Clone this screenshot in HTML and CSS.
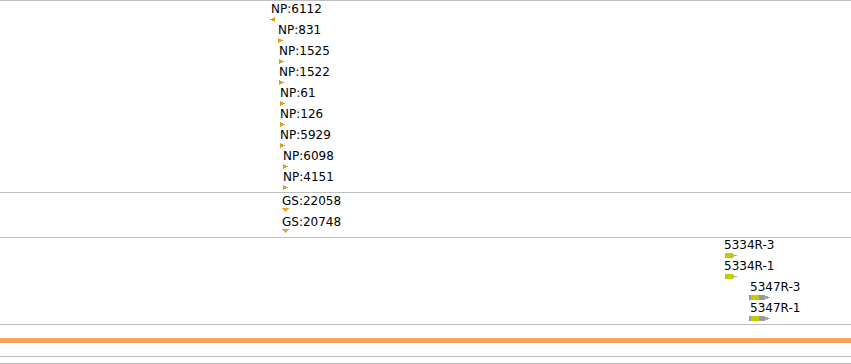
FILE: index.html
```html
<!DOCTYPE html>
<html>
<head>
<meta charset="utf-8">
<link rel="stylesheet" href="styles.css">
</head>
<body>
<div class="browser">
  <section class="track track-np">
    <div class="feature" style="margin-left:271px"><span class="label">NP:6112</span><svg class="glyph glyph-left" width="6" height="9"><polygon class="tri" points="5,2 0,4.5 5,7"/></svg></div>
    <div class="feature" style="margin-left:278px"><span class="label">NP:831</span><svg class="glyph" width="6" height="9"><polygon class="tri" points="0,2 5,4.5 0,7"/></svg></div>
    <div class="feature" style="margin-left:279px"><span class="label">NP:1525</span><svg class="glyph" width="6" height="9"><polygon class="tri" points="0,2 5,4.5 0,7"/></svg></div>
    <div class="feature" style="margin-left:279px"><span class="label">NP:1522</span><svg class="glyph" width="6" height="9"><polygon class="tri" points="0,2 5,4.5 0,7"/></svg></div>
    <div class="feature" style="margin-left:280px"><span class="label">NP:61</span><svg class="glyph" width="6" height="9"><polygon class="tri" points="0,2 5,4.5 0,7"/></svg></div>
    <div class="feature" style="margin-left:280px"><span class="label">NP:126</span><svg class="glyph" width="6" height="9"><polygon class="tri" points="0,2 5,4.5 0,7"/></svg></div>
    <div class="feature" style="margin-left:280px"><span class="label">NP:5929</span><svg class="glyph" width="6" height="9"><polygon class="tri" points="0,2 5,4.5 0,7"/></svg></div>
    <div class="feature" style="margin-left:283px"><span class="label">NP:6098</span><svg class="glyph" width="6" height="9"><polygon class="tri" points="0,2 5,4.5 0,7"/></svg></div>
    <div class="feature" style="margin-left:283px"><span class="label">NP:4151</span><svg class="glyph" width="6" height="9"><polygon class="tri" points="0,2 5,4.5 0,7"/></svg></div>
  </section>
  <section class="track track-gs">
    <div class="feature" style="margin-left:282px"><span class="label">GS:22058</span><svg class="glyph" width="8" height="9"><polygon class="tri-down" points="0,1 7,1 3.5,5"/></svg></div>
    <div class="feature" style="margin-left:282px"><span class="label">GS:20748</span><svg class="glyph" width="8" height="9"><polygon class="tri-down" points="0,1 7,1 3.5,5"/></svg></div>
  </section>
  <section class="track track-prb">
    <div class="feature" style="margin-left:724px"><span class="label">5334R-3</span><svg class="glyph" width="14" height="9"><rect class="probe" x="1" y="2" width="8" height="5"/><polygon class="arrow" points="9,3 13,4.5 9,6"/></svg></div>
    <div class="feature" style="margin-left:724px"><span class="label">5334R-1</span><svg class="glyph" width="14" height="9"><rect class="probe" x="1" y="2" width="8" height="5"/><polygon class="arrow" points="9,3 13,4.5 9,6"/></svg></div>
    <div class="feature" style="margin-left:750px"><span class="label">5347R-3</span><svg class="glyph glyph-left" width="22" height="9"><rect class="body" x="0" y="2" width="16" height="5"/><rect class="probe" x="2" y="2" width="8" height="5"/><polygon class="arrow" points="16,2.5 21,4.5 16,6.5"/></svg></div>
    <div class="feature" style="margin-left:750px"><span class="label">5347R-1</span><svg class="glyph glyph-left" width="22" height="9"><rect class="body" x="0" y="2" width="16" height="5"/><rect class="probe" x="2" y="2" width="8" height="5"/><polygon class="arrow" points="16,2.5 21,4.5 16,6.5"/></svg></div>
  </section>
  <div class="highlight"></div>
  <div class="ruler"></div>
</div>
</body>
</html>
```

FILE: styles.css
```css
html, body {
  margin: 0;
  padding: 0;
  background: #ffffff;
}

body {
  font-family: "DejaVu Sans", "Liberation Sans", sans-serif;
  font-size: 12px;
  color: #000000;
  width: 851px;
  height: 364px;
  overflow: hidden;
}

.browser {
  display: flex;
  flex-direction: column;
}

.track {
  display: flex;
  flex-direction: column;
  border-bottom: 1px solid #c0c0c0;
}

.track-np {
  border-top: 1px solid #c0c0c0;
  padding-top: 2px;
  height: 189px;
}

.track-gs {
  padding-top: 2px;
  height: 42px;
}

.track-prb {
  padding-top: 1px;
  height: 85px;
}

.feature {
  display: flex;
  flex-direction: column;
  align-items: flex-start;
  height: 21px;
  flex: none;
}

.label {
  line-height: 12px;
  height: 12px;
  white-space: nowrap;
}

.glyph {
  display: block;
  overflow: visible;
  shape-rendering: crispEdges;
}

.glyph-left {
  margin-left: -1px;
}

.tri {
  fill: #d9a11c;
}

.tri-down {
  fill: #eea62a;
}

.probe {
  fill: #c2cc00;
}

.body {
  fill: #9a9a9a;
}

.arrow {
  fill: #a8a8a8;
}

.highlight {
  margin-top: 13px;
  height: 5px;
  background: #f4a460;
}

.ruler {
  margin-top: 13px;
  height: 6px;
  border-top: 1px solid #c0c0c0;
  border-bottom: 1px solid #c0c0c0;
}
```
